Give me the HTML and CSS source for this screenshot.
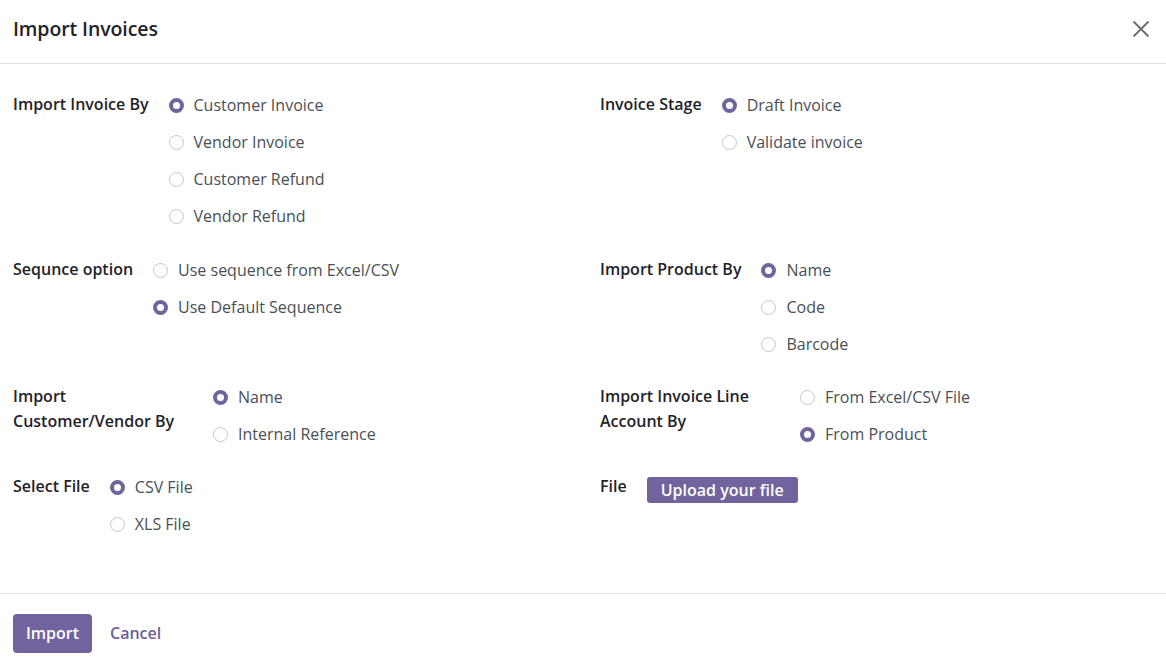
FILE: index.html
```html
<!DOCTYPE html>
<html>
<head>
<meta charset="utf-8">
<link rel="stylesheet" href="styles.css">
</head>
<body>
<div class="dialog">
  <header class="dlg-header">
    <h4 class="dlg-title">Import Invoices</h4>
    <button class="close" aria-label="Close">
      <svg width="18" height="18" viewBox="0 0 18 18"><path d="M1.5 1.5 L16.5 16.5 M16.5 1.5 L1.5 16.5" stroke="#6b6b6b" stroke-width="1.8" fill="none"/></svg>
    </button>
  </header>
  <main class="dlg-body">
    <div class="grid">
      <div class="field first">
        <div class="label">Import Invoice By</div>
        <div class="options">
          <label class="opt"><span class="radio on"></span>Customer Invoice</label>
          <label class="opt"><span class="radio"></span>Vendor Invoice</label>
          <label class="opt"><span class="radio"></span>Customer Refund</label>
          <label class="opt"><span class="radio"></span>Vendor Refund</label>
        </div>
      </div>
      <div class="field">
        <div class="label">Invoice Stage</div>
        <div class="options">
          <label class="opt"><span class="radio on"></span>Draft Invoice</label>
          <label class="opt"><span class="radio"></span>Validate invoice</label>
        </div>
      </div>

      <div class="field">
        <div class="label">Sequnce option</div>
        <div class="options">
          <label class="opt"><span class="radio"></span>Use sequence from Excel/CSV</label>
          <label class="opt"><span class="radio on"></span>Use Default Sequence</label>
        </div>
      </div>
      <div class="field">
        <div class="label">Import Product By</div>
        <div class="options">
          <label class="opt"><span class="radio on"></span>Name</label>
          <label class="opt"><span class="radio"></span>Code</label>
          <label class="opt"><span class="radio"></span>Barcode</label>
        </div>
      </div>

      <div class="field">
        <div class="label">Import Customer/Vendor By</div>
        <div class="options">
          <label class="opt"><span class="radio on"></span>Name</label>
          <label class="opt"><span class="radio"></span>Internal Reference</label>
        </div>
      </div>
      <div class="field">
        <div class="label">Import Invoice Line Account By</div>
        <div class="options">
          <label class="opt"><span class="radio"></span>From Excel/CSV File</label>
          <label class="opt"><span class="radio on"></span>From Product</label>
        </div>
      </div>

      <div class="field">
        <div class="label">Select File</div>
        <div class="options">
          <label class="opt"><span class="radio on"></span>CSV File</label>
          <label class="opt"><span class="radio"></span>XLS File</label>
        </div>
      </div>
      <div class="field">
        <div class="label">File</div>
        <div class="options">
          <div class="upload-row"><button class="btn-upload">Upload your file</button></div>
        </div>
      </div>
    </div>
  </main>
  <footer class="dlg-footer">
    <button class="btn-primary">Import</button>
    <button class="btn-link">Cancel</button>
  </footer>
</div>
</body>
</html>
```
FILE: styles.css
```css
* { box-sizing: border-box; }
html, body { margin: 0; padding: 0; background: #fff; }
body {
  font-family: "Open Sans", "Noto Sans", sans-serif;
  font-size: 16px;
  color: #212529;
  width: 1166px;
  height: 664px;
  overflow: hidden;
}
.dialog { display: flex; flex-direction: column; height: 664px; }
.dlg-header {
  height: 64px;
  border-bottom: 1px solid #dee2e6;
  display: flex;
  align-items: center;
  justify-content: space-between;
  padding: 0 16px 0 13px;
}
.dlg-title { margin: 0; font-size: 19.5px; font-weight: 600; color: #1f2327; letter-spacing: -0.1px; padding-bottom: 7px; }
.close { border: 0; background: none; padding: 0; width: 18px; height: 18px; display: flex; margin-bottom: 5px; }
.dlg-body { flex: 1; padding: 23px 13px 0 13px; }
.grid {
  display: grid;
  grid-template-columns: 1fr 1fr;
  column-gap: 34px;
  row-gap: 16px;
  align-items: start;
}
.field {
  display: grid;
  grid-template-columns: fit-content(180px) auto;
  column-gap: 20px;
  justify-content: start;
}
.field.first { padding-bottom: 1px; }
.label {
  font-weight: 600;
  color: #1f2327;
  line-height: 25px;
  padding-top: 5px;
}
.options { display: flex; flex-direction: column; }
.opt {
  height: 37px;
  display: flex;
  align-items: center;
  gap: 10px;
  color: #4a4f55;
  white-space: nowrap;
  padding-bottom: 1px;
}
.radio {
  width: 15px; height: 15px;
  border-radius: 50%;
  border: 1px solid #c5c7ca;
  background: #fff;
  flex: none;
  margin-top: 1px;
}
.radio.on {
  border: 4.5px solid #71639e;
  background: #fff;
}
.upload-row { height: 37px; display: flex; align-items: center; padding-top: 4px; }
.btn-upload {
  font-family: inherit;
  font-size: 16px;
  font-weight: 600;
  color: #fff;
  background: #71639e;
  border: 0;
  border-radius: 3px;
  height: 26px;
  padding: 0 14px;
}
.dlg-footer {
  height: 71px;
  border-top: 1px solid #dee2e6;
  display: flex;
  align-items: flex-start;
  padding: 20px 13px 0 13px;
  gap: 4px;
}
.btn-primary {
  font-family: inherit;
  font-size: 16px;
  font-weight: 600;
  color: #fff;
  background: #71639e;
  border: 0;
  border-radius: 4px;
  height: 39px;
  width: 79px;
  padding: 0 0 1px;
}
.btn-link {
  font-family: inherit;
  font-size: 16px;
  font-weight: 600;
  color: #6b5f96;
  background: none;
  border: 0;
  height: 39px;
  padding: 0 14px 1px;
}
```
